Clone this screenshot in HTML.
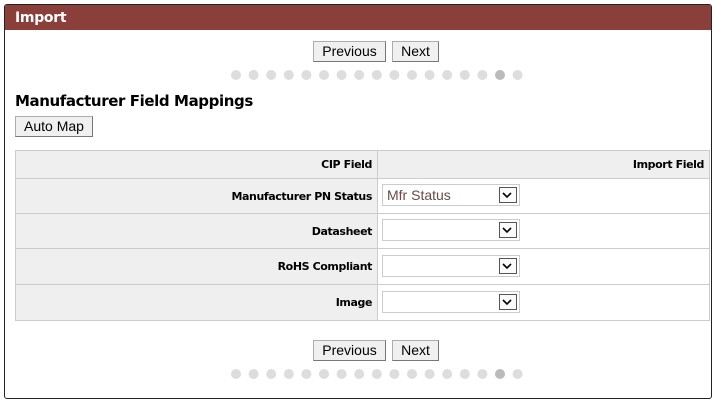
<!DOCTYPE html>
<html><head><style>
body{margin:0;width:716px;height:403px;background:#fff;font-family:"Liberation Sans",sans-serif;position:relative;overflow:hidden}
.panel{position:absolute;left:4px;top:4px;width:706px;height:393px;border:1px solid #222;border-radius:3px;overflow:hidden}
.hdr{height:25px;background:#8a3f3a;color:#fff;font-weight:bold;font-size:14px;line-height:26px;padding-left:10px;font-family:"DejaVu Sans",sans-serif;letter-spacing:-0.3px}
.btn{position:absolute;height:21px;box-sizing:border-box;background:#f0f0f0;border:1px solid #adadad;border-right-color:#777;border-bottom-color:#777;font-size:14px;line-height:19px;text-align:center;color:#000}
h1{position:absolute;left:15px;top:92px;margin:0;font-size:15px;font-family:"DejaVu Sans",sans-serif;font-weight:bold;letter-spacing:-0.4px}
table{position:absolute;left:15px;top:150px;width:695px;border-collapse:collapse;font-family:"DejaVu Sans",sans-serif;font-size:11px;font-weight:bold;letter-spacing:-0.4px}
td{border:1px solid #ccc;padding:0 5px;text-align:right}
td.l{background:#efefef;width:351px}
.sel{position:absolute;left:382px;width:138px;height:22px;box-sizing:border-box;border:1px solid #ccc;background:#fff;font-family:"Liberation Sans",sans-serif;font-size:14px;color:#6b4a45;font-weight:normal;line-height:20px;padding-left:4px;text-align:left}
.sel i{position:absolute;right:2px;top:2px;width:18px;height:16px;box-sizing:border-box;border:1px solid #555;background:#fafafa}
</style></head><body>
<div class="panel"><div class="hdr">Import</div></div>
<div class="btn" style="left:313px;top:41px;width:73px">Previous</div>
<div class="btn" style="left:392px;top:41px;width:47px">Next</div>
<h1>Manufacturer Field Mappings</h1>
<div class="btn" style="left:15px;top:116px;width:78px">Auto Map</div>
<table>
<tr style="height:28px;background:#efefef"><td class="l">CIP Field</td><td>Import Field</td></tr>
<tr style="height:35px"><td class="l">Manufacturer PN Status</td><td></td></tr>
<tr style="height:35px"><td class="l">Datasheet</td><td></td></tr>
<tr style="height:36px"><td class="l">RoHS Compliant</td><td></td></tr>
<tr style="height:36px"><td class="l">Image</td><td></td></tr>
</table>
<div class="sel" style="top:184px">Mfr Status<i></i></div>
<div class="sel" style="top:219px"><i></i></div>
<div class="sel" style="top:255px"><i></i></div>
<div class="sel" style="top:291px"><i></i></div>
<div class="btn" style="left:313px;top:340px;width:73px">Previous</div>
<div class="btn" style="left:392px;top:340px;width:47px">Next</div>
<svg style="position:absolute;left:0;top:0" width="716" height="403">
<g fill="none" stroke="#000" stroke-width="1.6">
<path d="M503 193l4 4 4-4"/><path d="M503 228l4 4 4-4"/><path d="M503 264l4 4 4-4"/><path d="M503 300l4 4 4-4"/>
</g>
<g id="dots"></g>
</svg>
<script>
var s='';for(var i=0;i<17;i++){var x=236+i*17.6;var c=i==15?'#bbb':'#ddd';s+='<circle cx="'+x+'" cy="75" r="5" fill="'+c+'"/><circle cx="'+x+'" cy="374" r="5" fill="'+c+'"/>';}
document.getElementById('dots').innerHTML=s;
</script>
</body></html>
